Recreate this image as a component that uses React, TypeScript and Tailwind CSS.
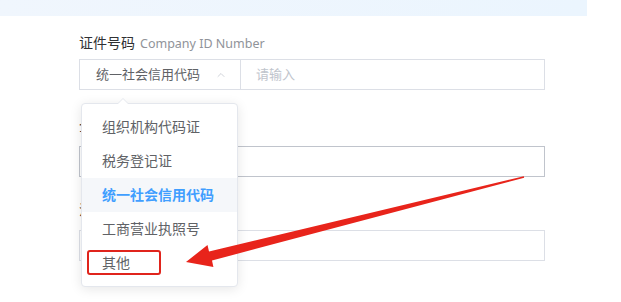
import { ChevronUp } from "lucide-react";

const options = ["组织机构代码证", "税务登记证", "统一社会信用代码", "工商营业执照号", "其他"];

function Field({ label, en, children }: { label: string; en?: string; children: React.ReactNode }) {
    return (
        <div className="flex flex-col">
            <div className="h-[20px] leading-[20px] text-[14px] text-[#303133]">
                {label}
                {en && <span className="ml-[5px] text-[12.5px] text-[#909399]">{en}</span>}
            </div>
            {children}
        </div>
    );
}

export default function App() {
    return (
        <div
            className="relative w-[621px] h-[302px] overflow-hidden bg-white"
            style={{ fontFamily: '"Noto Sans", "Noto Sans CJK SC", sans-serif' }}
        >
            <div className="h-[16px] w-[587px] bg-gradient-to-r from-[#f0f6fd] to-[#ebf5fe]" />

            <div className="ml-[79px] w-[466px] flex flex-col">
                <div className="mt-[17px]">
                    <Field label="证件号码" en="Company ID Number">
                        <div className="mt-[6px] h-[31px] flex border border-[#dcdfe6] text-[13px]">
                            <div className="w-[161px] flex items-center justify-between pl-[16px] pr-[13px] border-r border-[#dcdfe6] text-[#606266]">
                                <span>统一社会信用代码</span>
                                <ChevronUp size={12} strokeWidth={1.5} className="text-[#c0c4cc]" />
                            </div>
                            <div className="flex-1 flex items-center pl-[15px] text-[#c0c4cc]">请输入</div>
                        </div>
                    </Field>
                </div>

                <div className="mt-[26px]">
                    <Field label="企业名称">
                        <div className="mt-[10px] h-[31px] border border-[#c0c4cc]" />
                    </Field>
                </div>

                <div className="mt-[23px]">
                    <Field label="注册地址">
                        <div className="mt-[10px] h-[31px] border border-[#dcdfe6]" />
                    </Field>
                </div>
            </div>

            {/* dropdown */}
            <div className="absolute left-[81px] top-[103px] w-[157px] bg-white border border-[#e4e7ed] rounded-[4px] shadow-[0_2px_12px_rgba(0,0,0,0.1)] py-[6px]">
                <div className="absolute -top-[6px] left-[35px] w-0 h-0 border-x-[6px] border-x-transparent border-b-[6px] border-b-[#e4e7ed]" />
                <div className="absolute -top-[5px] left-[36px] w-0 h-0 border-x-[5px] border-x-transparent border-b-[5px] border-b-white" />
                {options.map((o, i) => (
                    <div
                        key={o}
                        className={
                            i === 2
                                ? "h-[34px] leading-[34px] px-[20px] text-[14px] bg-[#f5f7fa] text-[#409eff] font-bold"
                                : "relative h-[34px] leading-[34px] px-[20px] text-[14px] text-[#606266]"
                        }
                    >
                        {o}
                        {i === 4 && (
                            <div className="absolute left-[5px] top-[4px] w-[74px] h-[25px] border-[2.5px] border-[#e0241c] rounded-[3px]" />
                        )}
                    </div>
                ))}
            </div>

            {/* annotation arrow */}
            <svg className="absolute left-0 top-0" width="621" height="302" viewBox="0 0 621 302">
                <polygon
                    points="186,262 213.4,267 212,260.5 524.2,177.7 523.8,176.3 209,251.5 207.5,245 "
                    fill="#e8241b"
                />
            </svg>
        </div>
    );
}
